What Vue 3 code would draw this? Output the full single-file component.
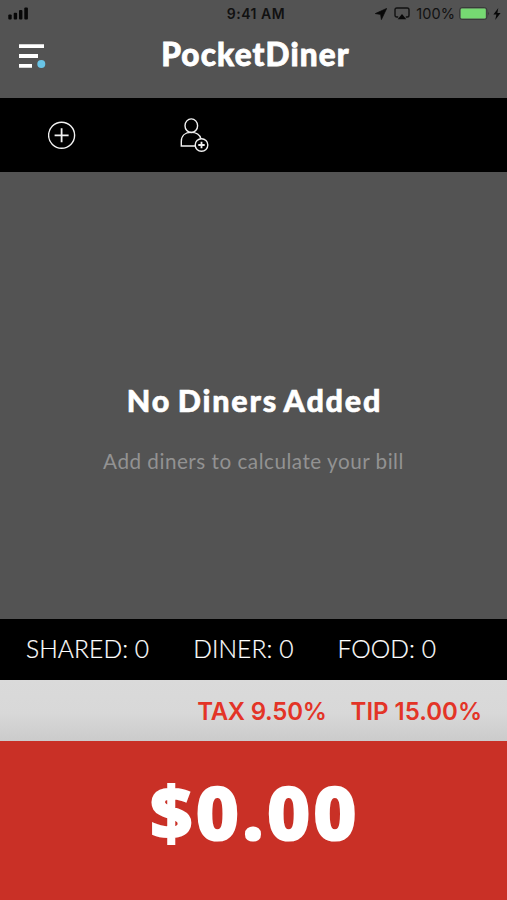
<template>
  <div class="app">
    <header class="header">
      <div class="status-bar">
        <div class="status-side">
          <svg class="signal" width="21" height="13" viewBox="0 0 21 13">
            <rect x="0.3" y="7.5" width="3.4" height="5" rx="1" />
            <rect x="5.7" y="5.7" width="3.4" height="6.8" rx="1" />
            <rect x="11" y="3" width="3.4" height="9.5" rx="1" />
            <rect x="16.3" y="0.5" width="3.6" height="12" rx="1" />
          </svg>
        </div>
        <span class="time">9:41 AM</span>
        <div class="status-side right">
          <svg class="location" width="12" height="12" viewBox="0 0 12 12">
            <path d="M11.7 0.4L0.3 5.6l5.3 0.8 0.8 5.2z" stroke="#080808" stroke-width="0.7" stroke-linejoin="round" />
          </svg>
          <svg class="airplay" width="16" height="14" viewBox="0 0 16 14">
            <path
              d="M4.2 10H2.8Q1 10 1 8.2V2.8Q1 1 2.8 1h10.4Q15 1 15 2.8v5.4Q15 10 13.2 10h-1.4"
              fill="none"
              stroke="#111"
              stroke-width="1.4"
            />
            <path d="M8 7l4.3 5.3H3.7z" />
          </svg>
          <span class="percent">100%</span>
          <svg class="battery" width="32" height="13" viewBox="0 0 32 13">
            <rect x="0.6" y="0.6" width="27.3" height="11.8" rx="2.5" fill="none" stroke="#383838" />
            <rect x="1.7" y="1.6" width="25.1" height="9.8" rx="1.2" fill="#76d972" />
            <path d="M29.2 4.6q1.8 1.9 0 3.8z" fill="#333" />
          </svg>
          <svg class="bolt" width="8" height="12" viewBox="0 0 8 12">
            <path d="M5.3 0L0.4 6.6h3L2.2 12l5.4-7H4.4z" />
          </svg>
        </div>
      </div>
      <div class="nav">
        <button type="button" class="menu-btn" aria-label="Menu">
          <svg width="28" height="26" viewBox="0 0 28 26">
            <path d="M0 2.2h25M0 12h19M0 21.8h13" stroke="#fff" stroke-width="3.8" />
            <circle cx="22.3" cy="20" r="4" fill="#69c4e6" />
          </svg>
        </button>
        <h1 class="title">PocketDiner</h1>
      </div>
    </header>

    <div class="toolbar">
      <button type="button" class="tool-btn" aria-label="Add item">
        <svg width="28" height="28" viewBox="0 0 28 28" fill="none" stroke="#f2f2f2">
          <circle cx="13.6" cy="14.3" r="13" stroke-width="1.4" />
          <path d="M13.6 7.3v14M6.6 14.3h14" stroke-width="1.8" />
        </svg>
      </button>
      <button type="button" class="tool-btn" aria-label="Add diner">
        <svg width="29" height="35" viewBox="0 0 29 35" fill="none" stroke="#f2f2f2" stroke-width="1.4">
          <ellipse cx="11.3" cy="7.7" rx="6.3" ry="6.8" />
          <path d="M16 28H1.3v-4.5C1.3 17.5 5.5 14.4 11 14.4c5 0 8.8 2 9.8 6.2" />
          <circle cx="21.5" cy="27" r="6.3" />
          <path d="M21.5 23.8v6.4M18.3 27h6.4" stroke-width="1.8" />
        </svg>
      </button>
    </div>

    <main class="empty">
      <h2>No Diners Added</h2>
      <p>Add diners to calculate your bill</p>
    </main>

    <div class="counts">
      <span v-for="item in counts" :key="item.label">
        {{ item.label }}: {{ item.value }}
      </span>
    </div>

    <div class="rates">
      <span class="tax">TAX {{ tax.toFixed(2) }}%</span>
      <span class="tip">TIP {{ tip.toFixed(2) }}%</span>
    </div>

    <footer class="total">
      <span>${{ total.toFixed(2) }}</span>
    </footer>
  </div>
</template>

<script setup>
import { ref } from 'vue'

const counts = ref([
  { label: 'SHARED', value: 0 },
  { label: 'DINER', value: 0 },
  { label: 'FOOD', value: 0 }
])

const tax = ref(9.5)
const tip = ref(15)
const total = ref(0)
</script>

<style>
body {
  margin: 0;
  background: #535353;
}
</style>

<style scoped>
.app {
  display: flex;
  flex-direction: column;
  width: 100%;
  height: 100vh;
  overflow: hidden;
  background: #535353;
  color: #fff;
  font-family: Lato, "Liberation Sans", sans-serif;
}

svg {
  display: block;
  flex: none;
}

button {
  padding: 0;
  border: 0;
  background: none;
}

h1,
h2,
p {
  margin: 0;
  white-space: nowrap;
}

.header {
  height: 98px;
  flex: none;
}

.status-bar {
  display: grid;
  grid-template-columns: 1fr auto 1fr;
  align-items: center;
  height: 27px;
  padding: 0 6px 0 8px;
  color: #111;
  fill: #080808;
  font-family: Inter, sans-serif;
}

.status-side {
  display: flex;
  align-items: center;
}

.right {
  justify-content: flex-end;
}

.time {
  padding-left: 3px;
  font-size: 14px;
  font-weight: 600;
  letter-spacing: 0.5px;
}

.airplay {
  margin: 1px 0 0 7px;
}

.percent {
  margin: 0 4px 0 6px;
  font-size: 14.5px;
  letter-spacing: 0.1px;
}

.bolt {
  margin-left: 2px;
}

.nav {
  display: grid;
  grid-template-columns: 60px 1fr 60px;
  height: 58px;
  align-items: center;
}

.menu-btn {
  padding: 1px 0 0 19px;
}

.title {
  padding: 0 0 5px 4px;
  text-align: center;
  font-size: 31.5px;
  font-weight: 900;
  line-height: 40px;
  letter-spacing: 1.15px;
  -webkit-text-stroke: 0.8px #fff;
}

.toolbar {
  display: flex;
  align-items: center;
  gap: 104px;
  height: 74px;
  flex: none;
  padding-left: 48px;
  box-sizing: border-box;
  background: #000;
}

.empty {
  flex: 1;
  text-align: center;
}

.empty h2 {
  padding: 208px 0 0 2px;
  font-size: 30.5px;
  font-weight: 900;
  line-height: 40px;
  letter-spacing: 1.8px;
  word-spacing: -2.5px;
  -webkit-text-stroke: 0.6px #fff;
}

.empty p {
  padding-top: 27px;
  color: #929292;
  font-size: 20.7px;
  line-height: 28px;
  letter-spacing: 0.5px;
}

.counts {
  display: flex;
  align-items: center;
  gap: 44px;
  height: 61px;
  flex: none;
  padding: 0 0 2px 26px;
  box-sizing: border-box;
  background: #000;
  font-size: 24.6px;
  font-weight: 300;
  letter-spacing: 0.07px;
  white-space: nowrap;
  -webkit-text-stroke: 0.2px #fff;
}

.rates {
  display: flex;
  align-items: center;
  justify-content: flex-end;
  gap: 24px;
  height: 61px;
  flex: none;
  padding: 1px 25px 0 0;
  box-sizing: border-box;
  background: linear-gradient(#dadada 0%, #d8d8d8 55%, #cbcbcb 100%);
  color: #e33427;
  font-family: Inter, sans-serif;
  font-size: 24px;
  font-weight: 600;
}

.tax {
  letter-spacing: -0.25px;
}

.total {
  height: 159px;
  flex: none;
  background: #c93026;
  text-align: center;
  font-family: "Noto Sans", "Open Sans", sans-serif;
  font-size: 74px;
  font-weight: 800;
  line-height: 142px;
  letter-spacing: 3.6px;
  text-indent: 3px;
  -webkit-text-stroke: 2.2px #fff;
}
</style>
